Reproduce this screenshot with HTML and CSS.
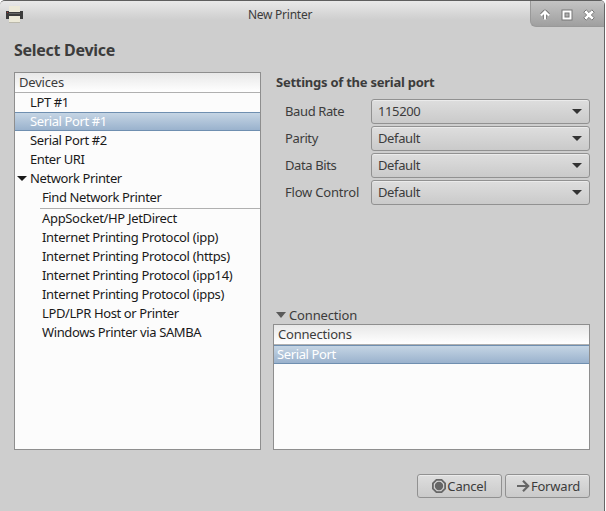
FILE: index.html
```
<!DOCTYPE html>
<html lang="en">
<head>
<meta charset="utf-8">
<title>New Printer</title>
<link rel="stylesheet" href="styles.css">
</head>
<body>
<div class="window">
  <header class="titlebar">
    <svg class="app-icon" width="20" height="19" viewBox="0 0 20 19">
      <path fill="#ece9d8" d="M4 0h11v16H4z"/>
      <path fill="#bbb9ac" d="M4 16h11v1H4z"/>
      <path fill="#3c3c3c" d="M1 5h3v1h11V5h3v8h-3v-3H4v3H1z"/>
      <path fill="#666" d="M4 7h11v1H4z"/>
      <path fill="#a33" d="M2 6h1v1H2z"/>
    </svg>
    <h1 class="title">New Printer</h1>
    <div class="controls">
      <svg width="74" height="26" viewBox="1 0 74 26">
        <path fill="none" stroke="#777" stroke-width="4" stroke-linejoin="round" d="M15 18v-7M11.5 14 15 10.5 18.500 14"/>
        <path fill="none" stroke="#fff" stroke-width="2.200" d="M15 18.500v-7M11 14.500 15 10.500 19 14.500"/>
        <path fill="none" stroke="#777" stroke-width="4" d="M33.500 10.500h7v7h-7z"/>
        <path fill="none" stroke="#fff" stroke-width="2" d="M33.500 10.500h7v7h-7z"/>
        <path fill="#fff" stroke="#777" stroke-linejoin="round" d="M53.8 11.2 56.2 8.800 59 11.6 61.8 8.800 64.2 11.2 61.4 14 64.2 16.8 61.8 19.2 59 16.4 56.2 19.2 53.8 16.8 56.6 14z"/>
      </svg>
    </div>
  </header>
  <h2 class="heading">Select Device</h2>
  <main class="content">
    <section class="tree devices">
      <div class="tree-header">Devices</div>
      <div class="row"><span>LPT #1</span></div>
      <div class="row selected"><span>Serial Port #1</span></div>
      <div class="row"><span>Serial Port #2</span></div>
      <div class="row"><span>Enter URI</span></div>
      <div class="row parent"><svg width="10" height="5" viewBox="0 0 10 5"><path fill="#1a1a1a" d="M0 0h10L5 5z"/></svg><span>Network Printer</span></div>
      <div class="row child"><span>Find Network Printer</span></div>
      <div class="separator"></div>
      <div class="row child protocol"><span>AppSocket/HP JetDirect</span></div>
      <div class="row child protocol"><span>Internet Printing Protocol (ipp)</span></div>
      <div class="row child protocol"><span>Internet Printing Protocol (https)</span></div>
      <div class="row child protocol"><span>Internet Printing Protocol (ipp14)</span></div>
      <div class="row child protocol"><span>Internet Printing Protocol (ipps)</span></div>
      <div class="row child"><span>LPD/LPR Host or Printer</span></div>
      <div class="row child"><span>Windows Printer via SAMBA</span></div>
    </section>
    <section class="settings">
      <h3 class="subheading">Settings of the serial port</h3>
      <div class="form">
        <label>Baud Rate</label><div class="combo"><span>115200</span><svg width="10" height="5" viewBox="0 0 10 5"><path fill="#333" d="M0 0h10L5 5z"/></svg></div>
        <label>Parity</label><div class="combo"><span>Default</span><svg width="10" height="5" viewBox="0 0 10 5"><path fill="#333" d="M0 0h10L5 5z"/></svg></div>
        <label>Data Bits</label><div class="combo"><span>Default</span><svg width="10" height="5" viewBox="0 0 10 5"><path fill="#333" d="M0 0h10L5 5z"/></svg></div>
        <label class="wide">Flow Control</label><div class="combo"><span>Default</span><svg width="10" height="5" viewBox="0 0 10 5"><path fill="#333" d="M0 0h10L5 5z"/></svg></div>
      </div>
      <div class="expander"><svg width="10" height="6" viewBox="0 0 10 6"><path fill="#5a5a5a" d="M0 0h10L5 6z"/></svg><span>Connection</span></div>
      <div class="tree connections">
        <div class="tree-header">Connections</div>
        <div class="row selected"><span>Serial Port</span></div>
      </div>
    </section>
  </main>
  <footer class="actions">
    <button class="button"><svg width="14" height="14" viewBox="0 0 14 14"><path fill="none" stroke="#666" stroke-width="1.8" d="M4.4.9h5.2l3.5 3.5v5.2l-3.5 3.5H4.4L.9 9.6V4.4z"/><circle cx="7" cy="7" r="4.2" fill="#666"/></svg><span>Cancel</span></button>
    <button class="button forward"><svg width="13" height="12" viewBox="0 0 13 12"><path fill="none" stroke="#666" stroke-width="2.2" d="M0 6h11M6 .8 11.2 6 6 11.2"/></svg><span>Forward</span></button>
  </footer>
</div>
</body>
</html>
```
FILE: styles.css
```
* { box-sizing: border-box; }
body {
  margin: 0;
  background: #fff;
  font: 13px/19px "Noto Sans", "Open Sans", sans-serif;
  letter-spacing: -0.15px;
  color: #3c3c3c;
}
h1, h2, h3 { margin: 0; }
svg { display: block; flex: none; }
.window {
  width: 605px;
  height: 511px;
  overflow: hidden;
  background: #cecece;
  border-top: 1px solid #5e5e5e;
  border-right: 1px solid #666;
  border-radius: 5px 5px 0 0;
}
.titlebar {
  display: grid;
  grid-template-columns: 74px 1fr 74px;
  height: 28px;
  background: linear-gradient(#e9e9e9, #cecece 19px);
}
.app-icon { margin: 5px 0 0 5px; }
.title {
  padding-right: 44px;
  font-size: 12px;
  font-weight: 400;
  line-height: 28px;
  letter-spacing: -0.25px;
  text-align: center;
}
.controls {
  height: 26px;
  overflow: hidden;
  background: linear-gradient(#c4c4c4, #9f9f9f);
  border: 1px solid #999;
  border-width: 0 0 1px 1px;
  border-bottom-left-radius: 6px;
}
.heading {
  height: 42px;
  padding: 10px 0 0 14px;
  font-size: 16px;
  line-height: 22px;
  letter-spacing: -0.28px;
}
.content {
  display: grid;
  grid-template-columns: 247px 317px;
  column-gap: 12px;
  height: 379px;
  padding: 1px 0 0 14px;
}
.tree {
  background: #fcfcfc;
  border: 1px solid #8e8e8e;
  color: #1a1a1a;
}
.tree-header {
  height: 20px;
  padding-left: 4px;
  letter-spacing: -0.2px;
  color: #3c3c3c;
  background: linear-gradient(#e8e8e8, #fff);
  border-bottom: 1px solid #b0b0b0;
}
.row {
  display: flex;
  align-items: center;
  height: 19px;
  letter-spacing: -0.39px;
  white-space: nowrap;
}
.devices .row { padding-left: 15px; }
.devices .row.parent { gap: 3px; padding-left: 2px; }
.devices .row.child { padding-left: 27px; }
.row.protocol { letter-spacing: -0.33px; }
.row.selected {
  color: #fff;
  background: linear-gradient(#c5d5e4, #9ab2cd);
  border: 1px solid #6f8fb0;
  border-width: 1px 0;
}
.separator {
  height: 2px;
  margin-left: 25px;
  border-bottom: 1px solid #b0b0b0;
}
.settings { display: flex; flex-direction: column; }
.subheading {
  height: 27px;
  padding-left: 3px;
  font-size: 13px;
  line-height: 21px;
  letter-spacing: -0.25px;
}
.form {
  display: grid;
  grid-template-columns: 86px 219px;
  grid-auto-rows: 25px;
  row-gap: 2px;
  padding-left: 12px;
  line-height: 25px;
  letter-spacing: -0.38px;
}
.form .wide { letter-spacing: -0.2px; }
.combo {
  display: flex;
  align-items: center;
  justify-content: space-between;
  padding: 0 7px 0 6px;
  line-height: 23px;
}
.combo, .button {
  background: linear-gradient(#dedede, #cacaca);
  border: 1px solid #919191;
  border-radius: 3px;
  box-shadow: inset 0 1px #ebebeb;
}
.expander {
  display: flex;
  align-items: center;
  gap: 3px;
  height: 18px;
  margin-top: auto;
  padding-left: 3px;
}
.connections { height: 126px; }
.connections .row { padding-left: 3px; }
.actions {
  display: flex;
  justify-content: flex-end;
  gap: 3px;
  padding: 24px 14px 0 0;
}
.button {
  display: flex;
  align-items: center;
  justify-content: center;
  gap: 1px;
  width: 85px;
  height: 24px;
  padding: 0;
  font: inherit;
  letter-spacing: -0.2px;
  line-height: 18px;
  color: inherit;
}
.forward { gap: 1px; padding-left: 2px; }
```
